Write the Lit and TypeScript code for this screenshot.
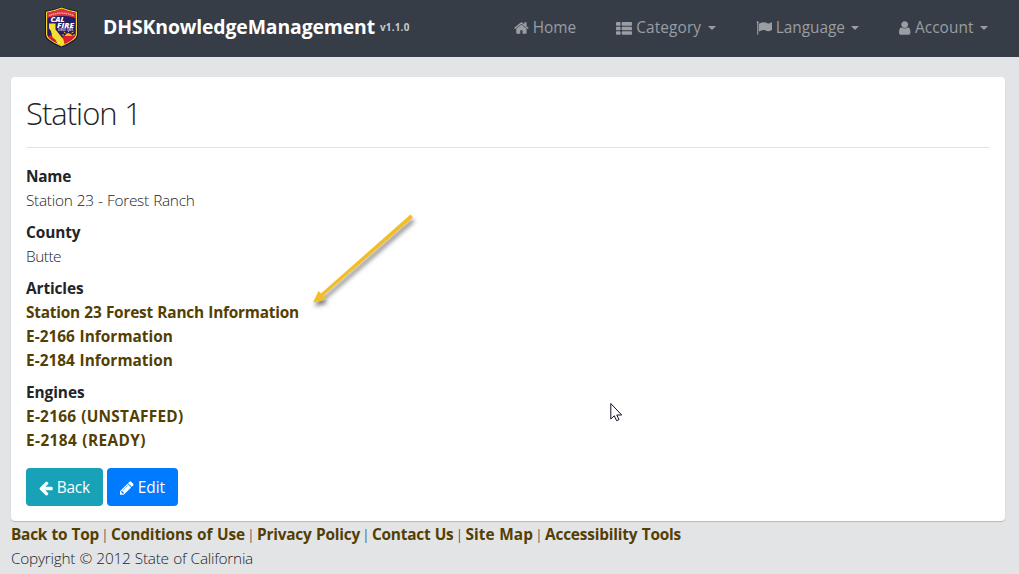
import { LitElement, html, svg, css, TemplateResult } from "lit";
import { customElement, property } from "lit/decorators.js";

/** A single line of text tracked so that it occupies a given width. */
@customElement("fit-text")
class FitText extends LitElement {
  @property({ type: Number }) width = 0;

  static styles = css`
    :host { display: inline-block; white-space: nowrap; }
    .line { display: inline-block; }
  `;

  firstUpdated() {
    const line = this.renderRoot.querySelector(".line") as HTMLElement;
    const count = (this.textContent || "").trim().length;
    const natural = line.getBoundingClientRect().width;
    if (count && this.width) {
      line.style.letterSpacing = `${(this.width - natural) / count}px`;
    }
  }

  render() {
    return html`<span class="line"><slot></slot></span>`;
  }
}

const icons: Record<string, { w: number; body: TemplateResult }> = {
  home: {
    w: 1664,
    body: svg`<path d="M1408 992v480q0 26-19 45t-45 19H960v-384H704v384H320q-26 0-45-19t-19-45V992q0-1 .5-3t.5-3l575-474 575 474q1 2 1 6zm223-69l-62 74q-8 9-21 11h-3q-13 0-21-7L832 424l-692 577q-12 8-24 7-13-2-21-11l-62-74q-8-10-7-23.500T37 878l719-599q32-26 76-26t76 26l244 204V288q0-14 9-23t23-9h192q14 0 23 9t9 23v408l219 182q10 8 11 21.500t-7 23.500z"/>`,
  },
  list: {
    w: 1792,
    body: svg`${[256, 768, 1280].map(
      (y) => svg`<rect x="0" y=${y - 20} width="512" height="400" rx="90"/><rect x="640" y=${y - 20} width="1152" height="400" rx="90"/>`
    )}`,
  },
  flag: {
    w: 1792,
    body: svg`<path d="M320 256q0 72-64 110v1266q0 13-9.500 22.500t-22.500 9.500h-64q-13 0-22.500-9.500t-9.500-22.500V366q-64-38-64-110 0-53 37.500-90.500t90.500-37.500 90.500 37.500 37.500 90.500zm1472 64v763q0 25-12.500 38.500t-39.500 27.500q-215 116-369 116-61 0-123.500-22t-108.500-48-115.500-48-142.500-22q-192 0-464 146-17 9-33 9-26 0-45-19t-19-45V474q0-32 31-55 21-14 79-43 236-120 421-120 107 0 200 29t219 88q38 19 88 19 54 0 117.500-21t110-47 88-47 54.500-21q26 0 45 19t19 45z"/>`,
  },
  user: {
    w: 1280,
    body: svg`<path d="M1280 1399q0 109-62.500 187t-150.500 78H213q-88 0-150.500-78T0 1399q0-85 8.500-160.500t31.500-152 58.500-131 94-89T327 832q131 128 313 128t313-128q76 0 134.500 34.500t94 89 58.500 131 31.500 152 8.500 160.500zm-256-887q0 159-112.500 271.500T640 896 368.500 783.500 256 512t112.500-271.500T640 128t271.500 112.500T1024 512z"/>`,
  },
  arrow: {
    w: 1536,
    body: svg`<path d="M1536 896v128q0 53-32.500 90.500t-84.500 37.500H715l293 294q38 36 38 90t-38 90l-75 76q-37 37-90 37-52 0-91-37L101 1051q-37-37-37-91 0-52 37-91l651-650q38-38 91-38 52 0 90 38l75 74q38 38 38 91t-38 91L715 768h704q52 0 84.500 37.500T1536 896z"/>`,
  },
  pencil: {
    w: 1536,
    body: svg`<path d="M363 1536l91-91-235-235-91 91v107h128v128h107zm523-928q0-22-22-22-10 0-17 7l-542 542q-7 7-7 17 0 22 22 22 10 0 17-7l542-542q7-7 7-17zm-54-192l416 416-832 832H0v-416zm683 96q0 53-37 90l-166 166-416-416 166-165q36-38 90-38 53 0 91 38l235 234q37 39 37 91z"/>`,
  },
};

const icon = (name: string) => html`<svg class="icon" width=${(icons[name].w * 16) / 1792} height="16"
  viewBox="0 0 ${icons[name].w} 1792" fill="currentColor">${icons[name].body}</svg>`;

const nav = [
  { icon: "home", label: "Home", width: 43.5, menu: false },
  { icon: "list", label: "Category", width: 65, menu: true },
  { icon: "flag", label: "Language", width: 69.3, menu: true },
  { icon: "user", label: "Account", width: 58.6, menu: true },
];

const fields = [
  { label: "Name", width: 45, values: [{ text: "Station 23 - Forest Ranch", width: 168.5 }], link: false },
  { label: "County", width: 54.5, values: [{ text: "Butte", width: 35 }], link: false },
  {
    label: "Articles", width: 57.5, link: true,
    values: [
      { text: "Station 23 Forest Ranch Information", width: 273 },
      { text: "E-2166 Information", width: 147 },
      { text: "E-2184 Information", width: 147 },
    ],
  },
  {
    label: "Engines", width: 58.5, link: true,
    values: [
      { text: "E-2166 (UNSTAFFED)", width: 157.5 },
      { text: "E-2184 (READY)", width: 120 },
    ],
  },
];

const footerLinks = [
  { text: "Back to Top", width: 88 },
  { text: "Conditions of Use", width: 134 },
  { text: "Privacy Policy", width: 103 },
  { text: "Contact Us", width: 81.5 },
  { text: "Site Map", width: 67.5 },
  { text: "Accessibility Tools", width: 136 },
];

@customElement("app-root")
class AppRoot extends LitElement {
  static styles = css`
    :host {
      display: block;
      position: relative;
      height: 574px;
      overflow: hidden;
      background: #e3e4e6;
      color: #212529;
      font: 300 15.4px/24px "Open Sans", "Noto Sans", sans-serif;
      word-spacing: 0.6px;
    }
    * { box-sizing: border-box; }
    .icon { display: block; flex: none; }
    .bar {
      display: flex;
      align-items: center;
      height: 57px;
      padding: 0 31px 1px 44px;
      background: #363d47;
      color: #9a9da2;
      font-weight: 400;
    }
    .logo { display: block; flex: none; margin-bottom: 3px; }
    .brand { margin: 0 0 2px 24px; color: #fff; font-weight: 700; font-size: 19.4px; }
    .version { margin: 0 0 1px 5px; color: #c9ccd0; font-weight: 700; font-size: 9.8px; }
    .nav { display: flex; gap: 40px; margin-left: auto; }
    .item { display: flex; align-items: center; gap: 4px; }
    .caret {
      width: 8px;
      margin-left: 2.5px;
      border: 4px solid transparent;
      border-top-color: currentColor;
      border-bottom: 0;
    }
    .card {
      height: 444px;
      margin: 20px 14px 0 11px;
      padding: 15px 15px 0;
      background: #fff;
      border-radius: 4px;
      box-shadow: 0 1px 1px rgba(0, 0, 0, 0.2);
    }
    .title { margin: 0; height: 56px; font-weight: 300; font-size: 31px; line-height: 43px; border-bottom: 1px solid #e2e3e4; }
    .fields { margin: 17px 0 15px; display: grid; gap: 8px; }
    .field { margin: 0; }
    .label, .link { font-weight: 700; }
    .value { display: block; height: 24px; margin: 0; }
    .label { height: 24px; }
    .link { color: #533f03; text-decoration: none; }
    .buttons { display: flex; gap: 4px; }
    .button {
      display: flex;
      align-items: center;
      gap: 4px;
      height: 38px;
      padding: 2px 13px 0;
      border: 0;
      border-radius: 4px;
      background: #17a2b8;
      color: #fff;
      font: 400 15.4px/24px "Open Sans", "Noto Sans", sans-serif;
    }
    .edit { background: #007bff; }
    .footer { margin: 2px 0 0 11px; }
    .links { display: flex; height: 24px; }
    .sep { width: 12px; text-align: center; }
    .pointer, .cursor { position: absolute; }
    .pointer { left: 300px; top: 200px; }
    .cursor { left: 610px; top: 402px; }
  `;

  private logo() {
    return svg`<svg class="logo" width="35" height="42" viewBox="0 0 35 42">
      <path d="M1 5Q9 4 17.500 .7Q26 4 34 5V29Q34 35 17.500 41.500Q1 35 1 29Z" fill="#17142f"/>
      <path d="M2 5.700Q10 4.600 17.500 1.600Q25 4.600 33 5.700V29Q32.500 34 17.500 40.500Q2.500 34 2 29Z" fill="#f2d42c"/>
      <path d="M3.200 6.700Q11 5.500 17.500 2.800Q24 5.500 31.800 6.700V28.800Q31 33.500 17.500 39.300Q4 33.500 3.200 28.800Z" fill="#281c62"/>
      <path d="M3.200 6.700Q11 5.500 17.500 2.800Q24 5.500 31.800 6.700V12Q17.500 7.500 3.200 12Z" fill="#dc3540"/>
      <path d="M5 9.700Q17.500 4.500 30 9.700" fill="none" stroke="#f5a8a0" stroke-width="1.300" stroke-dasharray="1.500 .6"/>
      <path d="M16 33l4-3 5-2 6.500 1.500Q29 34.500 18 39Z" fill="#d8202f"/>
      <path d="M4 30l4-1 5 6 4 3Q5 34 4 30Z" fill="#d8202f"/>
      <path d="M20.500 30q3.500-6 8 0z" fill="#f6b52b"/>
      <path d="M24.500 26v-1M21.500 27l-1.700-1M27.500 27l2-1M20 29h-2M29 29h2" stroke="#f6b52b"/>
      <path d="M5 17.500h6.500v6l8 10 1 5-3 1-4-1.800-2-4-3-2.500-1.500-6-2-3z" fill="#f5df32"/>
      <g fill="#fff" font-family="Open Sans" font-weight="800" font-style="italic" word-spacing="0">
        <text x="6.500" y="16" font-size="7.200" textLength="14" lengthAdjust="spacingAndGlyphs">CAL</text>
        <text x="13" y="22.300" font-size="7.200" textLength="17" lengthAdjust="spacingAndGlyphs">FIRE</text>
        <text x="14" y="25" font-size="2.600" textLength="15" lengthAdjust="spacingAndGlyphs" fill="#cbbfd2">SINCE 1885</text>
      </g>
    </svg>`;
  }

  render() {
    return html`
      <header class="bar">
        ${this.logo()}
        <fit-text class="brand" width="272">DHSKnowledgeManagement</fit-text>
        <fit-text class="version" width="29.5">v1.1.0</fit-text>
        <nav class="nav">
          ${nav.map((n) => html`<a class="item">${icon(n.icon)}<fit-text width=${n.width}>${n.label}</fit-text>${n.menu ? html`<span class="caret"></span>` : ""}</a>`)}
        </nav>
      </header>
      <main class="card">
        <h2 class="title"><fit-text width="115">Station 1</fit-text></h2>
        <dl class="fields">
          ${fields.map((f) => html`<div class="field">
            <dt class="label"><fit-text width=${f.width}>${f.label}</fit-text></dt>
            ${f.values.map((v) => html`<dd class="value ${f.link ? "link" : ""}"><fit-text width=${v.width}>${v.text}</fit-text></dd>`)}
          </div>`)}
        </dl>
        <div class="buttons">
          <button class="button">${icon("arrow")}<fit-text width="33.3">Back</fit-text></button>
          <button class="button edit">${icon("pencil")}<fit-text width="27.3">Edit</fit-text></button>
        </div>
      </main>
      <footer class="footer">
        <div class="links">
          ${footerLinks.map((l, i) => html`${i ? html`<span class="sep">|</span>` : ""}<a class="link"><fit-text width=${l.width}>${l.text}</fit-text></a>`)}
        </div>
        <fit-text width="242">Copyright © 2012 State of California</fit-text>
      </footer>
      <svg class="pointer" width="130" height="120" viewBox="0 0 130 120">
        <defs><filter id="soft" x="-20%" y="-20%" width="150%" height="150%">
          <feDropShadow dx="1.500" dy="4" stdDeviation="2" flood-color="#000" flood-opacity=".5"/>
        </filter></defs>
        <path d="M110.500 14.500L113 17.600L23.500 95.500L25.500 99.500L13 102.500L18.500 91L21 93.500Z" fill="#f2bd27" filter="url(#soft)"/>
      </svg>
      <svg class="cursor" width="13" height="21" viewBox="0 0 13 21">
        <path d="M.8 1.500V17L4.300 13.800L6.600 18.700L9 17.600L6.800 13H11.700Z" fill="#fff" stroke="#11112a" stroke-width="1"/>
      </svg>
    `;
  }
}
